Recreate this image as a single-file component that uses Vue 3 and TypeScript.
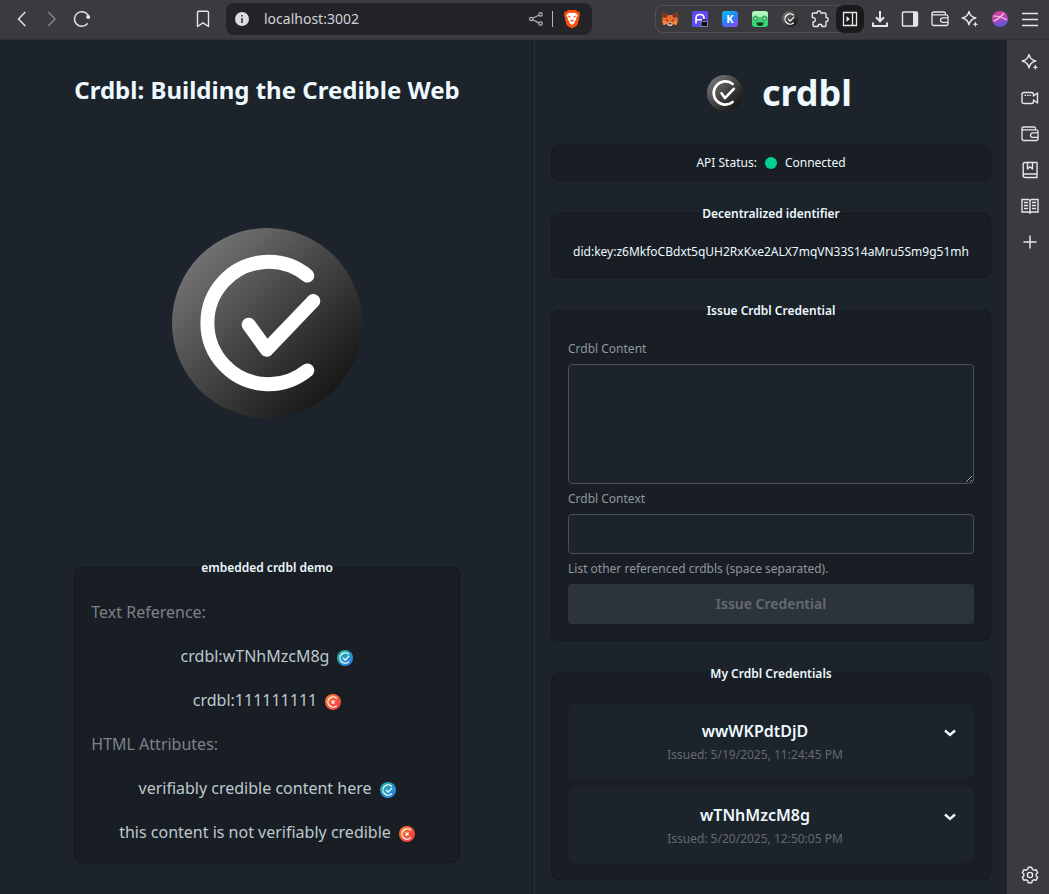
<script setup lang="ts">
import { ref, computed } from 'vue'

interface Credential {
  id: string
  issued: string
}

interface Reference {
  text: string
  valid: boolean
}

const did = 'did:key:z6MkfoCBdxt5qUH2RxKxe2ALX7mqVN33S14aMru5Sm9g51mh'
const address = ref('localhost:3002')
const content = ref('')
const context = ref('')
const canIssue = computed(() => content.value.trim().length > 0)

const textReferences: Reference[] = [
  { text: 'crdbl:wTNhMzcM8g', valid: true },
  { text: 'crdbl:111111111', valid: false },
]

const attributeReferences: Reference[] = [
  { text: 'verifiably credible content here', valid: true },
  { text: 'this content is not verifiably credible', valid: false },
]

const credentials: Credential[] = [
  { id: 'wwWKPdtDjD', issued: '5/19/2025, 11:24:45 PM' },
  { id: 'wTNhMzcM8g', issued: '5/20/2025, 12:50:05 PM' },
]
</script>

<template>
  <div class="browser">
    <svg class="defs" width="0" height="0" aria-hidden="true">
      <defs>
        <linearGradient id="g-dark" x1="0.1" y1="0.1" x2="0.88" y2="0.88">
          <stop offset="0" stop-color="#777" />
          <stop offset="0.5" stop-color="#444" />
          <stop offset="1" stop-color="#151515" />
        </linearGradient>
        <linearGradient id="g-ok" x1="0.1" y1="0.1" x2="0.9" y2="0.9">
          <stop offset="0" stop-color="#1fb39b" />
          <stop offset="1" stop-color="#2f80ed" />
        </linearGradient>
        <linearGradient id="g-bad" x1="0.1" y1="0.1" x2="0.9" y2="0.9">
          <stop offset="0" stop-color="#ff7a33" />
          <stop offset="1" stop-color="#ee3a3f" />
        </linearGradient>
        <linearGradient id="g-k" x1="0.2" y1="0" x2="0.8" y2="1">
          <stop offset="0" stop-color="#10b5f5" />
          <stop offset="0.55" stop-color="#2b7cf0" />
          <stop offset="1" stop-color="#8a4cf5" />
        </linearGradient>
        <linearGradient id="g-avatar" x1="0.3" y1="0" x2="0.6" y2="1">
          <stop offset="0" stop-color="#e0409a" />
          <stop offset="0.5" stop-color="#b044b8" />
          <stop offset="1" stop-color="#4a5be0" />
        </linearGradient>
        <symbol id="mark" viewBox="0 0 190 190">
          <circle cx="95" cy="95" r="95" fill="url(#g-dark)" />
          <path d="M135.3 47.6A61.2 61.2 0 1 0 135.3 142.4M76.7 96.7L94.7 121.7L141.3 73" fill="none" stroke="#fff" stroke-width="14" stroke-linecap="round" stroke-linejoin="round" />
        </symbol>
        <symbol id="mark-ok" viewBox="0 0 190 190">
          <circle cx="95" cy="95" r="95" fill="url(#g-ok)" />
          <path d="M135.3 47.6A61.2 61.2 0 1 0 135.3 142.4M76.7 96.7L94.7 121.7L141.3 73" fill="none" stroke="#fff" stroke-width="14" stroke-linecap="round" stroke-linejoin="round" />
        </symbol>
        <symbol id="mark-bad" viewBox="0 0 190 190">
          <circle cx="95" cy="95" r="95" fill="url(#g-bad)" />
          <path d="M135.3 47.6A61.2 61.2 0 1 0 135.3 142.4M83 83L109 109M109 83L83 109" fill="none" stroke="#fff" stroke-width="15" stroke-linecap="round" stroke-linejoin="round" />
        </symbol>
        <symbol id="sparkle" viewBox="0 0 18 18">
          <path d="M8 1.4C8.6 5.2 10.4 7 14.8 8C10.4 9 8.8 10.8 8 14.8C7.200 10.800 5.600 9 1.200 8C5.600 7 7.400 5.200 8 1.400Z" fill="none" stroke="currentColor" stroke-width="1.4" stroke-linejoin="round" />
          <path d="M14.400 11.300L15.200 13.500L17.400 14.300L15.200 15.100L14.400 17.300L13.600 15.100L11.400 14.300L13.600 13.500Z" fill="currentColor" />
        </symbol>
        <symbol id="wallet" viewBox="0 0 18 18">
          <path d="M14.500 4.800V3.500Q14.500 2 13 2H3Q1 2 1 3.500V13.500Q1 15.500 3 15.500H15Q17 15.500 17 13.500V6.800Q17 4.800 15 4.800H3Q1 4.800 1 3.300M17 7.800H11.800Q9.500 7.800 9.500 10.100Q9.500 12.400 11.800 12.400H17" fill="none" stroke="currentColor" stroke-width="1.300" />
        </symbol>
      </defs>
    </svg>

    <header class="toolbar">
      <nav class="group" aria-label="History">
        <button class="tool" type="button" aria-label="Back">
          <svg width="18" height="18" viewBox="0 0 18 18"><path d="M12.300 2L5.500 9L12.300 16" fill="none" stroke="currentColor" stroke-width="1.500" /></svg>
        </button>
        <button class="tool dim" type="button" aria-label="Forward">
          <svg width="18" height="18" viewBox="0 0 18 18"><path d="M5.300 2L12 9L5.300 16" fill="none" stroke="currentColor" stroke-width="1.500" /></svg>
        </button>
        <button class="tool" type="button" aria-label="Reload">
          <svg width="18" height="18" viewBox="0 0 18 18"><path d="M14.300 13.800A7.300 7.300 0 1 1 15 5.200" fill="none" stroke="currentColor" stroke-width="1.500" stroke-linecap="round" /><circle cx="15.200" cy="7" r="2" fill="currentColor" /></svg>
        </button>
      </nav>
      <span class="gap-left"></span>
      <button class="tool" type="button" aria-label="Bookmark">
        <svg width="18" height="18" viewBox="0 0 18 18"><path d="M3.500 2.500Q3.500 1.200 4.800 1.200H13.200Q14.500 1.200 14.500 2.500V16.500L9 12.800L3.500 16.500Z" fill="none" stroke="currentColor" stroke-width="1.400" stroke-linejoin="round" /></svg>
      </button>
      <div class="address">
        <svg width="14" height="14" viewBox="0 0 14 14" aria-hidden="true"><circle cx="7" cy="7" r="7" fill="#dcdbe0" /><path d="M7 3V4.600M7 6V11" stroke="#4a494e" stroke-width="1.800" /></svg>
        <input v-model="address" type="text" aria-label="Address" spellcheck="false" />
        <button class="inline-tool soft" type="button" aria-label="Share">
          <svg width="14" height="14" viewBox="0 0 14 14"><path d="M3.700 6.200L9.800 3.200M3.700 7.800L9.800 10.900" stroke="currentColor" stroke-width="1.200" /><g fill="none" stroke="currentColor" stroke-width="1.200"><circle cx="2.200" cy="7" r="1.600" /><circle cx="11.500" cy="2.400" r="1.700" /><circle cx="11.500" cy="11.600" r="1.700" /></g></svg>
        </button>
        <span class="rule"></span>
        <button class="inline-tool" type="button" aria-label="Shields">
          <svg width="18" height="20" viewBox="0 0 18 20">
            <path d="M5 1H13L14.500 2.600L16.300 2.700L17 5.500L16.600 6.800L15 14.500Q14.600 16 13.400 16.900L9 19.500L4.600 16.900Q3.400 16 3 14.500L1.400 6.800L1 5.500L1.700 2.700L3.500 2.600Z" fill="#fb4f12" />
            <path d="M9 4L11.600 3.700L14.300 5.500L14.500 7L13 9.300L13.300 11L11.400 12.200L12 13.600L9 16L6 13.600L6.600 12.200L4.700 11L5 9.300L3.500 7L3.700 5.500L6.400 3.700Z" fill="#fff" />
            <path d="M4.800 6.600L7.300 7.200L7.700 8.300L6 8.500ZM13.200 6.600L10.700 7.200L10.300 8.300L12 8.500ZM7 11.400L9 10.400L11 11.400L9 12.700Z" fill="#fb4f12" />
          </svg>
        </button>
      </div>
      <span class="gap-right"></span>
      <div class="extensions">
        <button class="tool" type="button" aria-label="Fox wallet">
          <svg width="18" height="18" viewBox="0 0 18 18">
            <path d="M1.500 2L7 5H11L16.500 2L16.300 7L17 11L15.500 15L12 14L10.500 16H7.500L6 14L2.500 15L1 11L1.700 7Z" fill="#ec6c2c" />
            <path d="M1.500 2L7 5L5.500 8L1.700 7ZM16.500 2L11 5L12.500 8L16.300 7Z" fill="#82301a" />
            <path d="M4.500 9L7.300 10.500L6.300 11.500ZM13.500 9L10.700 10.500L11.700 11.500Z" fill="#50292b" />
            <path d="M6 14L7.500 12.500H10.500L12 14L10.500 16H7.500Z" fill="#d8c7bd" />
            <path d="M7.500 13H10.500L10 14.500H8Z" fill="#32323a" />
            <path d="M2 11L5 11.500L5.500 14L2.500 15ZM16 11L13 11.500L12.500 14L15.500 15Z" fill="#fb8a42" />
          </svg>
        </button>
        <button class="tool" type="button" aria-label="Locked vault">
          <svg width="18" height="18" viewBox="0 0 18 18">
            <rect x="1" y="1" width="16" height="16" rx="1" fill="#5b4cf0" />
            <path d="M5 13.500V8Q5 4.500 9 4.500T13 8V10M5 9.700H11" fill="none" stroke="#fff" stroke-width="1.600" />
            <path d="M11.700 12.500V11Q11.700 9.500 13.200 9.500T14.700 11V12.500" fill="none" stroke="#111" stroke-width="1.200" />
            <rect x="10" y="11.500" width="6.500" height="5" rx="1" fill="#111" stroke="#d8d6f5" stroke-width="0.500" />
          </svg>
        </button>
        <button class="tool" type="button" aria-label="Keplr">
          <svg width="18" height="18" viewBox="0 0 18 18"><rect x="1" y="1" width="16" height="16" rx="3" fill="url(#g-k)" /><text x="9" y="13" text-anchor="middle" class="k">K</text></svg>
        </button>
        <button class="tool" type="button" aria-label="Frog">
          <svg width="18" height="18" viewBox="0 0 18 18">
            <rect x="1" y="1" width="16" height="16" rx="3" fill="#35d470" />
            <path d="M1 7V4Q1 1 4 1H14Q17 1 17 4V7Z" fill="#b5f5c0" />
            <circle cx="4.500" cy="8.500" r="3.200" fill="#4ade80" /><circle cx="13.500" cy="8.500" r="3.200" fill="#4ade80" />
            <circle cx="4.500" cy="8.500" r="1.700" fill="#d5f8dc" stroke="#174a2e" stroke-width="0.900" /><circle cx="13.500" cy="8.500" r="1.700" fill="#d5f8dc" stroke="#174a2e" stroke-width="0.900" />
            <path d="M5.500 12.500H12.500V13.500Q12 16 9 16T5.500 13.500Z" fill="#12351f" />
          </svg>
        </button>
        <button class="tool" type="button" aria-label="crdbl"><svg width="16" height="16"><use href="#mark" /></svg></button>
        <button class="tool" type="button" aria-label="Extensions">
          <svg width="18" height="18" viewBox="0 0 18 18"><path d="M2.300 3H6.200Q5.900 1 8 1T9.800 3H13.500Q15 3 15 4.500V7.500Q17.200 7.300 17.200 9.500T15 11.500V15Q15 16.500 13.500 16.500H11Q11 14.300 9 14.300T7 16.500H3.500Q2 16.500 2 15V12Q4.300 12 4.300 9.700T1.300 7.500V4Q1.300 3 2.300 3Z" fill="none" stroke="currentColor" stroke-width="1.400" stroke-linejoin="round" /></svg>
        </button>
        <button class="tool active" type="button" aria-label="Toggle side panel">
          <svg width="18" height="18" viewBox="0 0 18 18"><path d="M2.500 2.500H15.500V15.500H2.500ZM11.500 2.500V15.500" fill="none" stroke="currentColor" stroke-width="1.300" /><path d="M5.500 6L8.800 9L5.500 12Z" fill="currentColor" /></svg>
        </button>
      </div>
      <div class="group">
        <button class="tool" type="button" aria-label="Downloads">
          <svg width="18" height="18" viewBox="0 0 18 18"><path d="M9 1V11M5 7.300L9 11.300L13 7.300M2 12.500V16H16V12.500" fill="none" stroke="currentColor" stroke-width="2" /></svg>
        </button>
        <button class="tool" type="button" aria-label="Side bar">
          <svg width="18" height="18" viewBox="0 0 18 18"><rect x="1.500" y="2" width="15" height="14" rx="1" fill="none" stroke="currentColor" stroke-width="1.400" /><path d="M12 2H16.500V16H12Z" fill="currentColor" /></svg>
        </button>
        <button class="tool" type="button" aria-label="Wallet"><svg width="18" height="18"><use href="#wallet" /></svg></button>
        <button class="tool" type="button" aria-label="Assistant"><svg width="18" height="18"><use href="#sparkle" /></svg></button>
        <button class="tool" type="button" aria-label="Profile">
          <svg width="18" height="18" viewBox="0 0 18 18"><circle cx="9" cy="9" r="8" fill="url(#g-avatar)" /><path d="M2 6Q10 6 16 10M2.500 11Q7 10 13 3" fill="none" stroke="#f5c3dc" stroke-width="1.200" /></svg>
        </button>
        <button class="tool" type="button" aria-label="Menu">
          <svg width="18" height="18" viewBox="0 0 18 18"><path d="M1 3.500H17M1 9.500H17M1 15.500H17" stroke="currentColor" stroke-width="1.500" /></svg>
        </button>
      </div>
    </header>

    <div class="body">
      <main class="page">
        <div class="column">
          <h1>Crdbl: Building the Credible Web</h1>
          <div class="hero">
            <svg width="190" height="190" role="img" aria-label="crdbl logo"><use href="#mark" /></svg>
          </div>
          <fieldset class="panel demo">
            <legend>embedded crdbl demo</legend>
            <p class="kind">Text Reference:</p>
            <p v-for="item in textReferences" :key="item.text">
              {{ item.text }}<svg class="badge" width="16" height="16"><use :href="item.valid ? '#mark-ok' : '#mark-bad'" /></svg>
            </p>
            <p class="kind">HTML Attributes:</p>
            <p v-for="item in attributeReferences" :key="item.text">
              {{ item.text }}<svg class="badge" width="16" height="16"><use :href="item.valid ? '#mark-ok' : '#mark-bad'" /></svg>
            </p>
          </fieldset>
        </div>
      </main>

      <section class="side-panel" aria-label="crdbl">
        <div class="brand">
          <svg width="36" height="36" aria-hidden="true"><use href="#mark" /></svg>
          <h2>crdbl</h2>
        </div>

        <div class="status">
          <span>API Status:</span>
          <span class="dot"></span>
          <span>Connected</span>
        </div>

        <fieldset class="panel">
          <legend>Decentralized identifier</legend>
          <div class="did">{{ did }}</div>
        </fieldset>

        <fieldset class="panel">
          <legend>Issue Crdbl Credential</legend>
          <form class="form" @submit.prevent>
            <label for="content">Crdbl Content</label>
            <textarea id="content" v-model="content"></textarea>
            <label for="context">Crdbl Context</label>
            <input id="context" v-model="context" type="text" aria-describedby="hint" />
            <div id="hint" class="hint">List other referenced crdbls (space separated).</div>
            <button class="submit" type="submit" :disabled="!canIssue">Issue Credential</button>
          </form>
        </fieldset>

        <fieldset class="panel">
          <legend>My Crdbl Credentials</legend>
          <div class="list">
            <button v-for="item in credentials" :key="item.id" class="credential" type="button" aria-expanded="false">
              <span class="summary">
                <span class="name">{{ item.id }}</span>
                <span class="issued">Issued: {{ item.issued }}</span>
              </span>
              <svg width="16" height="16" viewBox="0 0 16 16" aria-hidden="true"><path d="M3 5.500L8 10L13 5.500" fill="none" stroke="currentColor" stroke-width="2.400" /></svg>
            </button>
          </div>
        </fieldset>
      </section>

      <aside class="rail" aria-label="Sidebar">
        <button class="tool" type="button" aria-label="Assistant"><svg width="18" height="18"><use href="#sparkle" /></svg></button>
        <button class="tool" type="button" aria-label="Talk">
          <svg width="18" height="18" viewBox="0 0 18 18"><path d="M3 3.500H10.500Q12.500 3.500 12.500 5.500V7L16.500 4V14L12.500 11V12.500Q12.500 14.500 10.500 14.500H3Q1 14.500 1 12.500V5.500Q1 3.500 3 3.500Z" fill="none" stroke="currentColor" stroke-width="1.400" stroke-linejoin="round" /><path d="M3.500 6.300H5M6 6.300H7.500M8.500 6.300H10" stroke="currentColor" stroke-width="1.300" /></svg>
        </button>
        <button class="tool" type="button" aria-label="Wallet"><svg width="18" height="18"><use href="#wallet" /></svg></button>
        <button class="tool" type="button" aria-label="Bookmarks">
          <svg width="18" height="18" viewBox="0 0 18 18"><path d="M16 13V1.500H4Q2.200 1.500 2.200 3.300V14.500Q2.200 16.500 4.200 16.500H16V13H4.200Q2.200 13 2.200 14.700M6.500 1.500V8L9 5.800L11.500 8V1.500" fill="none" stroke="currentColor" stroke-width="1.400" stroke-linejoin="round" /></svg>
        </button>
        <button class="tool" type="button" aria-label="Reading list">
          <svg width="18" height="18" viewBox="0 0 18 18"><path d="M1 2.500H7.500L9 3.500L10.500 2.500H17V15H10.500L9 16L7.500 15H1ZM9 3.500V17" fill="none" stroke="currentColor" stroke-width="1.400" /><path d="M3 5.500H7M3 8.500H7M3 11.500H7M11 5.500H15M11 8.500H15M11 11.500H15" stroke="currentColor" stroke-width="1.300" /></svg>
        </button>
        <button class="tool" type="button" aria-label="Add">
          <svg width="18" height="18" viewBox="0 0 18 18"><path d="M9 2.500V15.500M2.500 9H15.500" stroke="currentColor" stroke-width="1.500" /></svg>
        </button>
        <button class="tool last" type="button" aria-label="Settings">
          <svg width="18" height="18" viewBox="0 0 18 18"><path d="M7.300 1.200H10.700L11.300 3.300L12.900 4.200L15 3.700L16.700 6.600L15.200 8.100V9.900L16.700 11.400L15 14.300L12.900 13.800L11.300 14.700L10.700 16.800H7.300L6.700 14.700L5.100 13.800L3 14.300L1.300 11.400L2.800 9.900V8.100L1.300 6.600L3 3.700L5.100 4.200L6.700 3.300Z" fill="none" stroke="currentColor" stroke-width="1.400" stroke-linejoin="round" /><circle cx="9" cy="9" r="2.600" fill="none" stroke="currentColor" stroke-width="1.400" /></svg>
        </button>
      </aside>
    </div>
  </div>
</template>

<style>
body {
  margin: 0;
  background: #1d232a;
}
</style>

<style scoped>
.browser {
  display: flex;
  flex-direction: column;
  height: 100vh;
  overflow: hidden;
  color: #ecf9ff;
  font-family: "Noto Sans", "Liberation Sans", sans-serif;
  font-size: 12px;
  line-height: 18px;
}

.browser *,
.browser {
  box-sizing: border-box;
}

.defs {
  position: absolute;
}

button {
  margin: 0;
  border: 0;
  background: none;
  color: inherit;
  font: inherit;
}

/* Browser toolbar */
.toolbar {
  display: flex;
  flex: none;
  align-items: center;
  height: 40px;
  padding: 0 4px 2px 7px;
  border-bottom: 1px solid #333236;
  background: #3b3a3f;
}

.group {
  display: flex;
}

.tool {
  display: flex;
  flex: none;
  align-items: center;
  justify-content: center;
  width: 30px;
  height: 28px;
  padding: 0;
  color: #e6e5ea;
}

.dim {
  color: #848388;
}

.gap-left {
  flex: 91;
}

.gap-right {
  flex: 63;
}

.address {
  display: flex;
  flex: 346;
  align-items: center;
  min-width: 0;
  height: 32px;
  margin-left: 8px;
  padding: 0 11px 0 9px;
  border-radius: 8px;
  background: #242428;
}

.address input {
  flex: 1;
  min-width: 0;
  margin-left: 15px;
  padding: 0;
  border: 0;
  outline: 0;
  background: none;
  color: #d3d2d7;
  font: 14px/20px "Noto Sans", sans-serif;
}

.inline-tool {
  display: flex;
  padding: 0;
}

.soft {
  color: #b4b3b8;
}

.rule {
  width: 1px;
  height: 16px;
  margin: 0 10px 0 9px;
  background: #b4b3b8;
}

.extensions {
  display: flex;
  flex: none;
  margin-right: 1px;
  border-radius: 8px;
  box-shadow: inset 0 0 0 1px #515055;
}

.extensions .active {
  width: 28px;
  margin-left: 1px;
  border-radius: 8px;
  background: #1a1a1c;
}

.k {
  fill: #fff;
  font: bold 11px "Noto Sans", sans-serif;
}

/* Page layout */
.body {
  display: grid;
  flex: 1;
  grid-template-rows: minmax(0, 1fr);
  grid-template-columns: 534fr 473fr 42px;
  min-height: 0;
  background: #1d232a;
}

.page {
  display: flex;
  justify-content: center;
  min-width: 0;
  padding: 32px 16px 31px;
}

.column {
  display: flex;
  flex-direction: column;
}

h1 {
  margin: 0;
  font-size: 24px;
  font-weight: 700;
  line-height: 36px;
  text-align: center;
}

.hero {
  display: flex;
  flex: 1;
  align-items: center;
  justify-content: center;
  padding-bottom: 13px;
}

.side-panel {
  display: flex;
  flex-direction: column;
  gap: 16px;
  min-width: 0;
  padding: 16px;
  overflow: auto;
  border-left: 1px solid #313038;
  scrollbar-width: none;
}

.rail {
  display: flex;
  flex-direction: column;
  align-items: center;
  padding: 4px 0 1px 4px;
  background: #3c3a3f;
}

.rail .tool {
  height: 36px;
}

.rail .last {
  margin-top: auto;
}

/* Panels */
.panel {
  flex: none;
  min-width: 0;
  margin: 0;
  padding: 16px;
  border: 1px solid #15191e;
  border-radius: 8px;
  background: #191e24;
}

legend {
  margin: 0 auto -3px;
  padding: 8px 0 7px;
  font-weight: 600;
}

.demo {
  padding-top: 17px;
}

.demo p {
  margin: 0 0 16px;
  color: #bdc8ce;
  font-size: 16px;
  line-height: 28px;
  text-align: center;
}

.demo p:last-child {
  margin-bottom: 0;
}

.demo .kind {
  color: #7b828a;
  text-align: left;
}

.badge {
  margin-left: 8px;
  vertical-align: middle;
}

.brand {
  display: flex;
  flex: none;
  align-items: center;
  justify-content: center;
  gap: 19px;
  height: 73px;
  padding-left: 17px;
}

.brand h2 {
  margin: 0;
  font-size: 36px;
  font-weight: 700;
  line-height: 40px;
}

.status {
  display: flex;
  flex: none;
  align-items: center;
  justify-content: center;
  gap: 8px;
  padding: 8px;
  border: 1px solid #15191e;
  border-radius: 8px;
  background: #191e24;
}

.dot {
  width: 12px;
  height: 12px;
  border-radius: 50%;
  background: #00d390;
}

.did {
  text-align: center;
}

.form {
  display: flex;
  flex-direction: column;
  gap: 6px;
}

.form label,
.hint {
  color: #8f979e;
}

.form textarea,
.form input {
  width: 100%;
  margin: 0;
  padding: 8px 12px;
  border: 1px solid #484e55;
  border-radius: 4px;
  outline: 0;
  background: #1d232a;
  color: inherit;
  font: 14px/20px "Noto Sans", sans-serif;
}

.form textarea {
  height: 120px;
  resize: vertical;
  color-scheme: dark;
}

.form input {
  height: 40px;
}

.submit {
  height: 40px;
  border-radius: 4px;
  background: #3f4750;
  font-size: 14px;
  font-weight: 600;
}

.submit:disabled {
  background: #2c333a;
  color: #656b72;
}

.list {
  display: flex;
  flex-direction: column;
  gap: 8px;
}

.credential {
  display: flex;
  align-items: center;
  padding: 16px;
  border-radius: 8px;
  background: #1d232a;
}

.summary {
  display: flex;
  flex: 1;
  flex-direction: column;
  gap: 4px;
  padding-right: 16px;
}

.name {
  font-size: 16px;
  font-weight: 600;
  line-height: 24px;
}

.issued {
  color: #626974;
  line-height: 16px;
}

.credential > svg {
  margin-bottom: 16px;
}
</style>
